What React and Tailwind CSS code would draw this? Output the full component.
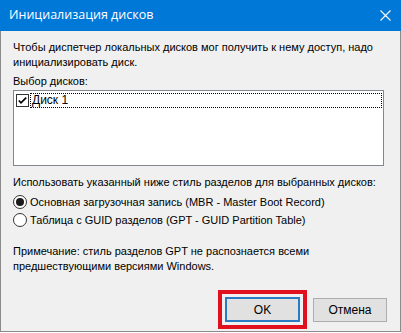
import React from "react";

const ui = { fontFamily: '"Liberation Sans", Arial, sans-serif' };
const title = { fontFamily: '"Open Sans", "Noto Sans", sans-serif' };

function CheckBox() {
  return (
    <div className="w-[13px] h-[13px] border border-[#333] bg-white flex items-center justify-center">
      <svg width="11" height="11" viewBox="0 0 11 11">
        <path d="M1.8 5.5 L4 7.8 L9.2 2.6" fill="none" stroke="#000" strokeWidth="1.7" />
      </svg>
    </div>
  );
}

function Radio({ checked }) {
  return (
    <div className="w-[14px] h-[14px] rounded-full border border-[#333] bg-white flex items-center justify-center">
      {checked && <div className="w-[8px] h-[8px] rounded-full bg-[#1a1a1a]" />}
    </div>
  );
}

export default function App() {
  return (
    <div className="w-[401px] h-[333px] bg-white">
      <div className="w-[401px] h-[332px] flex flex-col bg-[#f0f0f0] border-x border-b border-[#8c8c8c] text-[11px] text-black" style={ui}>
        {/* Title bar */}
        <div className="h-[31px] -mx-px bg-[#0078d7] flex items-center justify-between pl-[9px] pr-[10px] text-white">
          <span className="text-[12.5px]" style={title}>Инициализация дисков</span>
          <svg width="11" height="11" viewBox="0 0 11 11">
            <path d="M0.5 0.5 L10.5 10.5 M10.5 0.5 L0.5 10.5" stroke="#fff" strokeWidth="1.1" />
          </svg>
        </div>

        <div className="flex flex-col pl-[12px] pr-[16px] pt-[9px] leading-[15px]">
          <p>Чтобы диспетчер локальных дисков мог получить к нему доступ, надо</p>
          <p>инициализировать диск.</p>

          <p className="mt-[4px]">Выбор дисков:</p>
          <div className="mt-[1px] h-[76px] border border-[#828790] bg-white pt-[2px] pl-[2px] pr-[1px]">
            <div className="flex items-center h-[15px]">
              <CheckBox />
              <div className="flex-1 ml-[1px] h-[15px] border border-dotted border-black flex items-center pl-[1px] text-[12px]">
                Диск 1
              </div>
            </div>
          </div>

          <p className="mt-[9px]">Использовать указанный ниже стиль разделов для выбранных дисков:</p>
          <div className="mt-[4px] flex items-center gap-[3px] h-[16px]">
            <Radio checked />
            <span>Основная загрузочная запись (MBR - Master Boot Record)</span>
          </div>
          <div className="mt-[2px] flex items-center gap-[3px] h-[16px]">
            <Radio />
            <span>Таблица с GUID разделов (GPT - GUID Partition Table)</span>
          </div>

          <p className="mt-[16px]">Примечание: стиль разделов GPT не распознается всеми</p>
          <p>предшествующими версиями Windows.</p>
        </div>

        <div className="mt-auto mb-[2px] flex items-center justify-end pr-[13px]">
          <div className="border-[4px] border-[#e0101e] p-[3px]">
            <div className="w-[75px] h-[25px] border-2 border-[#2a7bc4] bg-[#e1e1e1] flex items-center justify-center text-[12px]">
              OK
            </div>
          </div>
          <div className="ml-[6px] w-[74px] h-[24px] border border-[#adadad] bg-[#e1e1e1] flex items-center justify-center text-[12px]">
            Отмена
          </div>
        </div>
      </div>
    </div>
  );
}
